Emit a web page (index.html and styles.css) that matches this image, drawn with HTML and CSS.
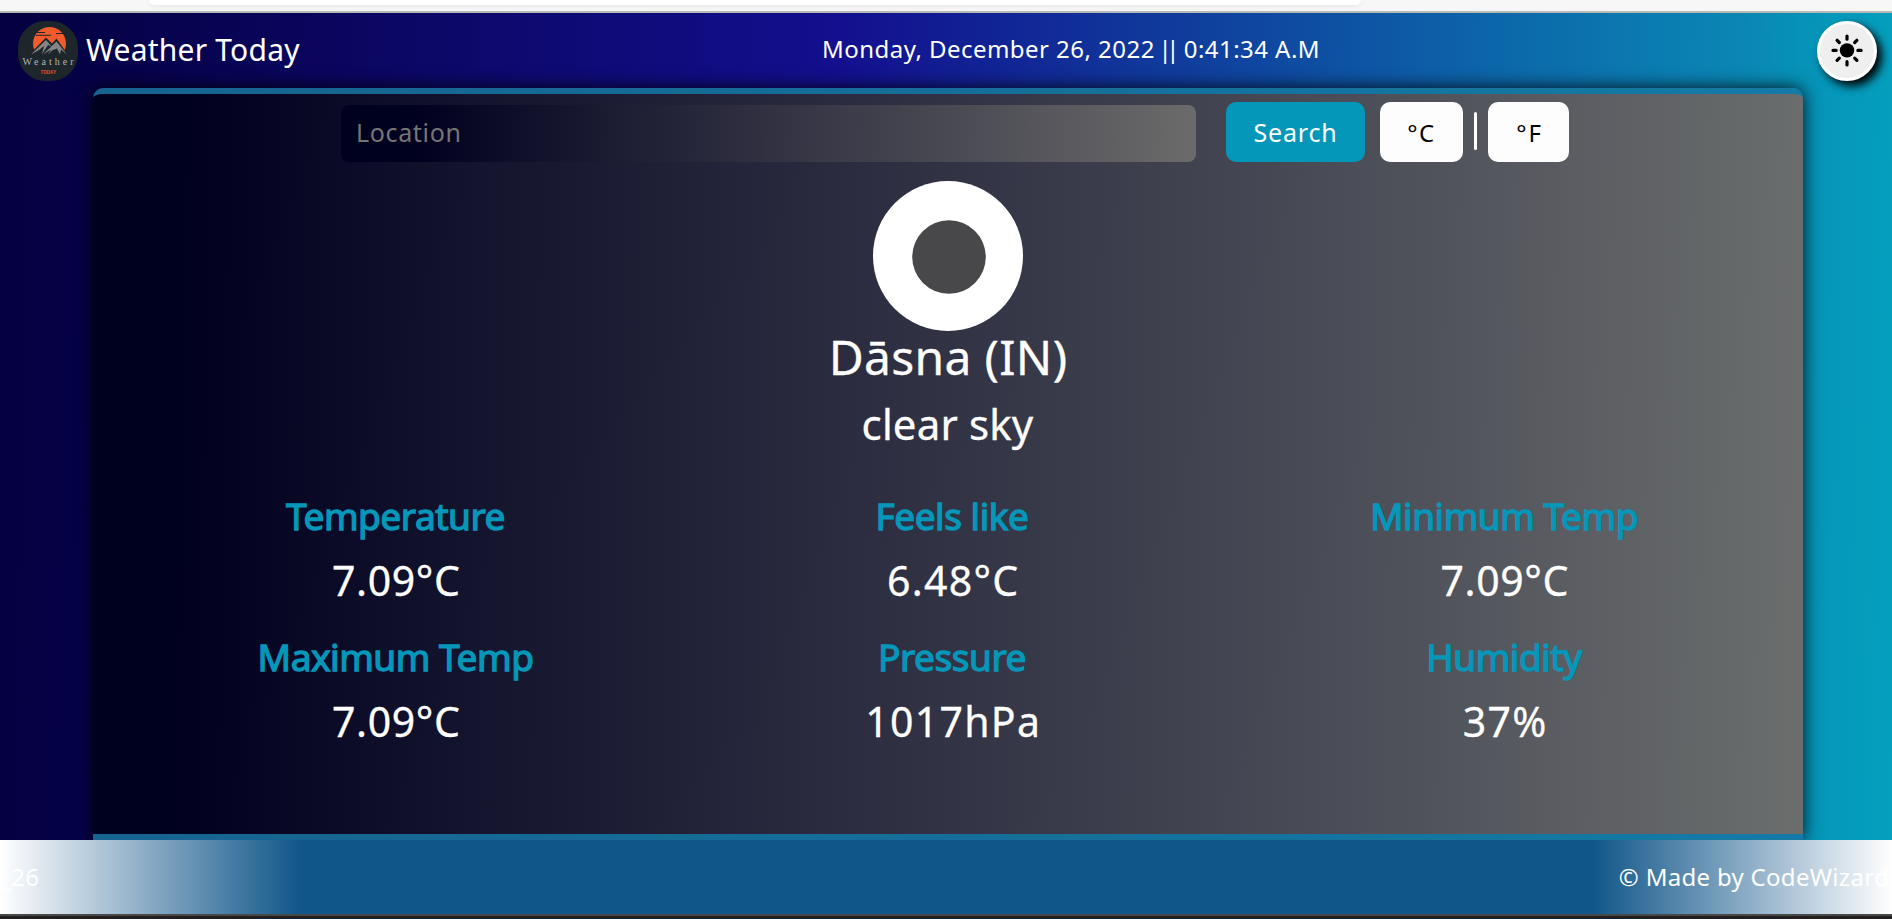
FILE: index.html
```html
<!DOCTYPE html>
<html lang="en">
<head>
<meta charset="utf-8">
<title>Weather Today</title>
<link rel="stylesheet" href="styles.css">
</head>
<body>
<div class="browser-edge"><div class="address-bar"></div></div>
<div class="page">
  <header class="header">
    <div class="brand">
      <svg class="logo" viewBox="0 0 60 60">
        <rect width="60" height="60" rx="27" fill="#1c262b"/>
        <circle cx="31.500" cy="22.500" r="16.500" fill="#f15a2b"/>
        <path d="M17 11.500h10M18 14.300h15M38 12.500h8" stroke="#1c262b" stroke-width="1"/>
        <path d="M10 35L28 16.500l6 6 4.500-5L51 35v6H10z" fill="#1c262b"/>
        <path d="M13 33.500L28 19l5.500 6.500-3.500-1.500-6 9 2-8-5 4zM25 33.500l13.500-13L49 33.500l-6-5-1 5-3-6-5 2-4 4 3-5z" fill="#858585"/>
        <text x="4.500" y="43.500" class="logo-name" textLength="51">Weather</text>
        <text x="22.500" y="53" class="logo-sub" textLength="15.500">TODAY</text>
      </svg>
      <span class="brand-name">Weather Today</span>
    </div>
    <div class="date">Monday, December 26, 2022 <span class="bars">||</span> 0:41:34 A.M</div>
    <button class="theme">
      <svg viewBox="0 0 54 54"><circle cx="27" cy="26.400" r="7.200"/>
        <path d="M27 12v3.200M27 37.700v3.200M13 26.400h3.200M37.900 26.400h3.200M17.100 16.300l2.200 2.200M34.700 34.200l2.200 2.200M17.100 36.400l2.200-2.200M34.700 18.500l2.200-2.200" stroke="#000" stroke-width="3.200" stroke-linecap="round"/></svg>
    </button>
  </header>
  <main class="card">
    <div class="search-row">
      <div class="field">Location</div>
      <button class="btn search">Search</button>
      <button class="btn unit-c">°C</button>
      <span class="divider"></span>
      <button class="btn unit-f">°F</button>
    </div>
    <div class="icon"><svg viewBox="0 0 150 150"><circle cx="76" cy="76" r="36.800" fill="#48484a"/></svg></div>
    <h1 class="city">Dāsna (IN)</h1>
    <p class="sky">clear sky</p>
    <div class="stats">
      <div class="stat"><h2>Temperature</h2><p>7.09°C</p></div>
      <div class="stat"><h2>Feels like</h2><p class="wide">6.48°C</p></div>
      <div class="stat"><h2>Minimum Temp</h2><p>7.09°C</p></div>
      <div class="stat"><h2>Maximum Temp</h2><p>7.09°C</p></div>
      <div class="stat"><h2>Pressure</h2><p class="wide">1017hPa</p></div>
      <div class="stat"><h2>Humidity</h2><p class="wide">37%</p></div>
    </div>
  </main>
  <footer class="footer"><span class="tail">_26</span><span class="credit">© Made by CodeWizard</span></footer>
</div>
<div class="taskbar"></div>
</body>
</html>
```
FILE: styles.css
```css
* { box-sizing: border-box; }
body { margin: 0; width: 1892px; height: 919px; overflow: hidden; font-family: "Noto Sans", sans-serif; color: #fff; }
h1, h2, p { margin: 0; font-weight: 400; }
button { border: 0; padding: 0; font-family: inherit; }
.browser-edge { height: 13px; background: #f7f7f7; border-bottom: 2px solid #b8bab8; }
.address-bar { width: 1212px; height: 5px; margin-left: 149px; background: #fff; border-radius: 0 0 6px 6px; box-shadow: 0 1px 5px #e4e4e4; }
.page { height: 901px; display: flex; flex-direction: column; overflow: hidden; background: linear-gradient(91deg, #04003f 0%, #130f8e 44%, #0a86b4 91%, #0597b9 96%, #05a0be 100%); }
.header { height: 75px; flex: none; display: flex; padding: 8px 15px 0 18px; }
.brand { display: flex; gap: 8px; width: 804px; }
.logo { width: 60px; height: 60px; }
.logo-name { font: 10px "Liberation Serif", serif; fill: #b5b5b5; }
.logo-sub { font: bold 4.500px "Liberation Sans", sans-serif; fill: #e2572e; }
.brand-name { font-size: 30px; line-height: 57px; letter-spacing: .22px; }
.date { font-size: 24px; line-height: 56px; letter-spacing: .46px; white-space: nowrap; }
.bars { letter-spacing: -5.500px; margin-left: -3px; margin-right: 3px; }
.theme { width: 60px; height: 60px; margin-left: auto; border: 3px solid #fff; border-radius: 50%; background: #efefef; box-shadow: 5px 5px 10px #000; }
.theme svg { display: block; width: 54px; height: 54px; }
.card { width: 1710px; height: 752px; flex: none; margin-left: 93px; border: solid transparent; border-width: 6px 0; border-radius: 10px 10px 0 0; background: linear-gradient(91deg, #00001f 5%, #4d4f59 75%, #6b6e6d 100%) padding-box, linear-gradient(90deg, #17638f, #147aa5) border-box; box-shadow: 0 0 18px rgba(0,0,0,.9); }
.search-row { display: flex; height: 68px; padding: 8px 0 0 248px; }
.field { width: 855px; height: 57px; margin: 3px 30px 0 0; padding-left: 15px; border-radius: 8px; background: linear-gradient(91deg, #00001f 8%, #6b6b6b 100%); color: #757575; font-size: 25px; line-height: 54px; letter-spacing: .650px; }
.btn { height: 60px; border-radius: 10px; font-size: 24px; background: #fdfdfd; color: #000; }
.search { width: 139px; margin-right: 15px; background: #0597ba; color: #fff; font-size: 25px; letter-spacing: .800px; }
.unit-c { width: 83px; letter-spacing: 1.500px; }
.unit-f { width: 81px; padding-left: 2px; letter-spacing: 1.800px; }
.divider { width: 3px; height: 38px; margin: 10px 11px; background: #fff; border-radius: 2px; }
.icon { width: 150px; height: 150px; margin: 19px auto 0; border-radius: 50%; background: #fff; }
.icon svg { display: block; }
.city { font-size: 48px; line-height: 52px; letter-spacing: .310px; text-align: center; -webkit-text-stroke: .3px #fff; }
.sky { font-size: 42px; line-height: 60px; margin-top: 11px; padding-right: 1px; letter-spacing: .150px; text-align: center; -webkit-text-stroke: .3px #fff; }
.stats { display: grid; grid-template-columns: 555px 558px 546px; grid-auto-rows: 140.500px; margin: 32px 0 0 25px; text-align: center; }
.stat h2 { font-size: 37px; line-height: 60px; letter-spacing: -.450px; color: #0597ba; -webkit-text-stroke: 1.300px #0597ba; }
.stat p { font-size: 41px; line-height: 68px; padding-left: 1.500px; letter-spacing: .600px; -webkit-text-stroke: .3px #fff; }
.stat .wide { padding-left: 2.500px; letter-spacing: 1.300px; }
.footer { height: 74px; display: flex; justify-content: space-between; padding: 0 3px 0 0; font-size: 24px; line-height: 74px; letter-spacing: .300px; background: linear-gradient(90deg, #fff 0, #b0c6d8 100px, #105689 300px, #105689 1592px, #b0c6d8 1792px, #fff 1892px); }
.tail { letter-spacing: .400px; }
.taskbar { height: 5px; background: #211f20; border-top: 2px solid #484848; }
```
